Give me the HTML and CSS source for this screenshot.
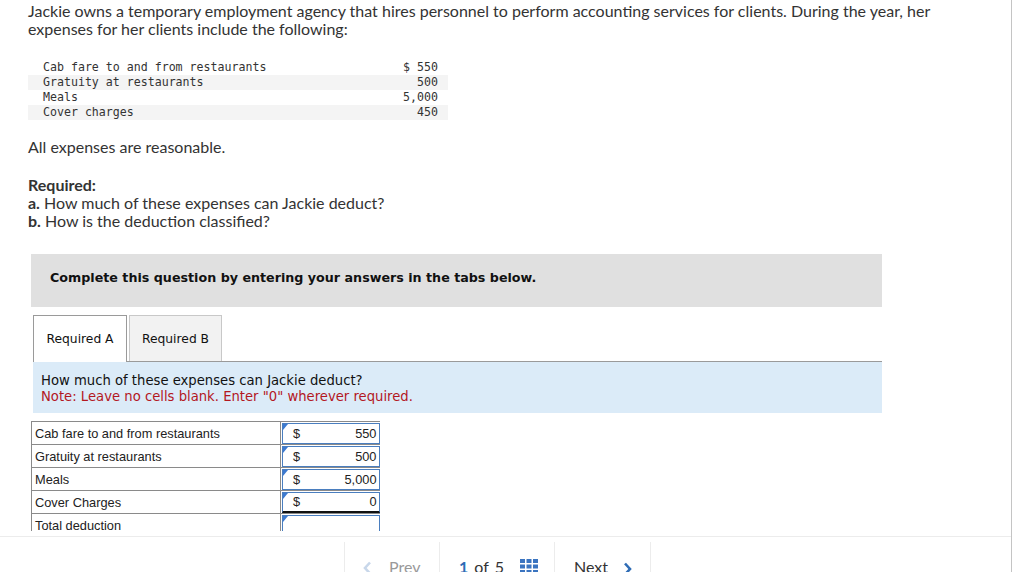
FILE: index.html
```html
<!DOCTYPE html>
<html>
<head>
<meta charset="utf-8">
<link rel="stylesheet" href="styles.css">
</head>
<body>
<div class="page">
  <div class="main">
    <p class="intro">Jackie owns a temporary employment agency that hires personnel to perform accounting services for clients. During the year, her expenses for her clients include the following:</p>
    <table class="mono">
      <tr><td class="ml">Cab fare to and from restaurants</td><td class="mv">$ 550</td></tr>
      <tr class="alt"><td class="ml">Gratuity at restaurants</td><td class="mv">500</td></tr>
      <tr><td class="ml">Meals</td><td class="mv">5,000</td></tr>
      <tr class="alt"><td class="ml">Cover charges</td><td class="mv">450</td></tr>
    </table>
    <p class="reason">All expenses are reasonable.</p>
    <div class="req">
      <div class="req-title">Required:</div>
      <div><b>a.</b> How much of these expenses can Jackie deduct?</div>
      <div><b>b.</b> How is the deduction classified?</div>
    </div>
    <div class="complete">Complete this question by entering your answers in the tabs below.</div>
    <div class="tabs">
      <div class="tab active">Required A</div>
      <div class="tab">Required B</div>
    </div>
    <div class="note-box">
      <div>How much of these expenses can Jackie deduct?</div>
      <div class="note">Note: Leave no cells blank. Enter "0" wherever required.</div>
    </div>
    <table class="answers">
      <tr><td class="lab">Cab fare to and from restaurants</td><td class="inp"><div class="box"><span class="flag"></span><span class="cur">$</span><span class="num">550</span></div></td></tr>
      <tr><td class="lab">Gratuity at restaurants</td><td class="inp"><div class="box"><span class="flag"></span><span class="cur">$</span><span class="num">500</span></div></td></tr>
      <tr><td class="lab">Meals</td><td class="inp"><div class="box"><span class="flag"></span><span class="cur">$</span><span class="num">5,000</span></div></td></tr>
      <tr class="sum"><td class="lab">Cover Charges</td><td class="inp"><div class="box"><span class="flag"></span><span class="cur">$</span><span class="num">0</span></div></td></tr>
      <tr><td class="lab">Total deduction</td><td class="inp"><div class="box"><span class="flag"></span><span class="cur"></span><span class="num"></span></div></td></tr>
    </table>
  </div>
  <div class="footer">
    <div class="pager">
      <div class="pg prev"><svg class="chev" width="9" height="14" viewBox="0 0 9 14"><path d="M7 1.5 L2 7 L7 12.5" fill="none" stroke="#c8d7ea" stroke-width="2.6"/></svg><span>Prev</span></div>
      <div class="pg count"><span class="cur-page">1</span><span class="of">of</span><span>5</span><svg class="grid" width="18" height="16" viewBox="0 0 18 16"><g fill="#3a74c0"><rect x="0" y="0" width="5" height="4"/><rect x="6.5" y="0" width="5" height="4"/><rect x="13" y="0" width="5" height="4"/><rect x="0" y="5.5" width="5" height="4"/><rect x="6.5" y="5.5" width="5" height="4"/><rect x="13" y="5.5" width="5" height="4"/><rect x="0" y="11" width="5" height="4"/><rect x="6.5" y="11" width="5" height="4"/><rect x="13" y="11" width="5" height="4"/></g></svg></div>
      <div class="pg next"><span>Next</span><svg class="chev" width="9" height="14" viewBox="0 0 9 14"><path d="M2 1.5 L7 7 L2 12.5" fill="none" stroke="#2f6cb5" stroke-width="2.6"/></svg></div>
    </div>
  </div>
</div>
</body>
</html>
```
FILE: styles.css
```css
html, body {
  margin: 0;
  padding: 0;
  background: #fff;
}
.page {
  width: 1011px;
  height: 572px;
  border-right: 1px solid #c4c4c4;
  overflow: hidden;
  display: flex;
  flex-direction: column;
}
.main {
  height: 531px;
  flex: none;
  overflow: hidden;
  padding-left: 28px;
  box-sizing: border-box;
  color: #333;
}
.intro {
  margin: 2px 0 0 0;
  width: 918px;
  font-family: "Lato", "Liberation Sans", sans-serif;
  font-size: 16px;
  line-height: 18px;
}
.mono {
  margin-top: 22px;
  border-collapse: collapse;
  width: 420px;
  font-family: "DejaVu Sans Mono", monospace;
  font-size: 11.6px;
  color: #333;
}
.mono td {
  height: 15px;
  padding: 0;
  line-height: 15px;
}
.mono .ml { padding-left: 15px; }
.mono .mv { text-align: right; padding-right: 10px; }
.mono .alt td { background: #f4f4f4; }
.reason {
  margin: 18px 0 0 0;
  font-family: "Lato", "Liberation Sans", sans-serif;
  font-size: 16px;
  line-height: 18px;
}
.req {
  margin-top: 20px;
  font-family: "Lato", "Liberation Sans", sans-serif;
  font-size: 16px;
  line-height: 18px;
}
.req-title { font-weight: bold; }
.complete {
  margin: 24px 0 0 3px;
  width: 851px;
  height: 53px;
  box-sizing: border-box;
  background: #e0e0e0;
  padding: 0 0 7px 19px;
  display: flex;
  align-items: center;
  font-family: "DejaVu Sans", Verdana, sans-serif;
  font-weight: bold;
  font-size: 12.7px;
  color: #111;
}
.tabs {
  margin: 8px 0 0 5px;
  width: 849px;
  display: flex;
  gap: 2px;
  border-bottom: 1px solid #9a9a9a;
  font-family: "DejaVu Sans", Verdana, sans-serif;
  font-size: 12.3px;
  color: #111;
  white-space: nowrap;
}
.tab {
  height: 46px;
  box-sizing: border-box;
  display: flex;
  align-items: center;
  justify-content: center;
  border: 1px solid #c8c8c8;
  border-bottom: none;
  background: #f2f2f2;
  width: 93px;
}
.tab.active {
  background: #fff;
  border-color: #9a9a9a;
  width: 94px;
  margin-bottom: -1px;
  height: 47px;
}
.note-box {
  margin-left: 5px;
  width: 849px;
  height: 51px;
  box-sizing: border-box;
  background: #dbebf8;
  padding: 11px 0 0 8px;
  font-family: "DejaVu Sans", Verdana, sans-serif;
  font-size: 13.2px;
  line-height: 16px;
  color: #111;
}
.note { color: #b3171f; }
.answers {
  margin: 8px 0 0 3px;
  border-collapse: collapse;
  font-family: "Liberation Sans", Arial, sans-serif;
  font-size: 12.8px;
  color: #222;
}
.answers td {
  padding: 0;
  height: 23px;
  box-sizing: border-box;
}
.answers .lab {
  width: 249px;
  border: 1px solid #8a8a8a;
  padding-left: 3px;
  vertical-align: middle;
}
.answers .inp {
  width: 99px;
  border-top: 1px solid #8a8a8a;
  padding: 0;
}
.box {
  position: relative;
  height: 21px;
  margin: 0 0 0 1px;
  border: 1px solid #4a7ebf;
  box-sizing: border-box;
  display: flex;
  align-items: center;
  padding: 0 2px 0 10px;
}
.flag {
  position: absolute;
  left: 0;
  top: 0;
  width: 0;
  height: 0;
  border-top: 6px solid #3d7ad0;
  border-right: 5px solid transparent;
}
.cur { flex: 1; }
.num { text-align: right; }
.answers tr.sum .inp .box { border-bottom: 2px solid #111; }
.answers tr.sum td.lab { border-bottom: 1px solid #8a8a8a; }
.footer {
  height: 41px;
  flex: none;
  margin-top: 5px;
  border-top: 1px solid #ececec;
  box-sizing: border-box;
  padding-top: 5px;
}
.pager {
  display: flex;
  margin-left: 344px;
  height: 40px;
  font-family: "Lato", "Liberation Sans", sans-serif;
  font-size: 16px;
  color: #333;
}
.pg {
  border-left: 1px solid #ececec;
  display: flex;
  align-items: flex-start;
  padding-top: 15px;
  box-sizing: border-box;
}
.prev { width: 95px; padding-left: 18px; color: #999; gap: 17px; }
.prev .chev { margin-top: 4px; }
.count { width: 115px; padding-left: 19px; gap: 0; }
.count .cur-page { color: #2f6cb5; font-weight: bold; margin-right: 6px; }
.count .of { margin-right: 6px; }
.count .grid { margin-left: 16px; margin-top: 2px; }
.next { width: 97px; padding-left: 19px; gap: 15px; border-right: 1px solid #ececec; }
.next .chev { margin-top: 5px; }
```
